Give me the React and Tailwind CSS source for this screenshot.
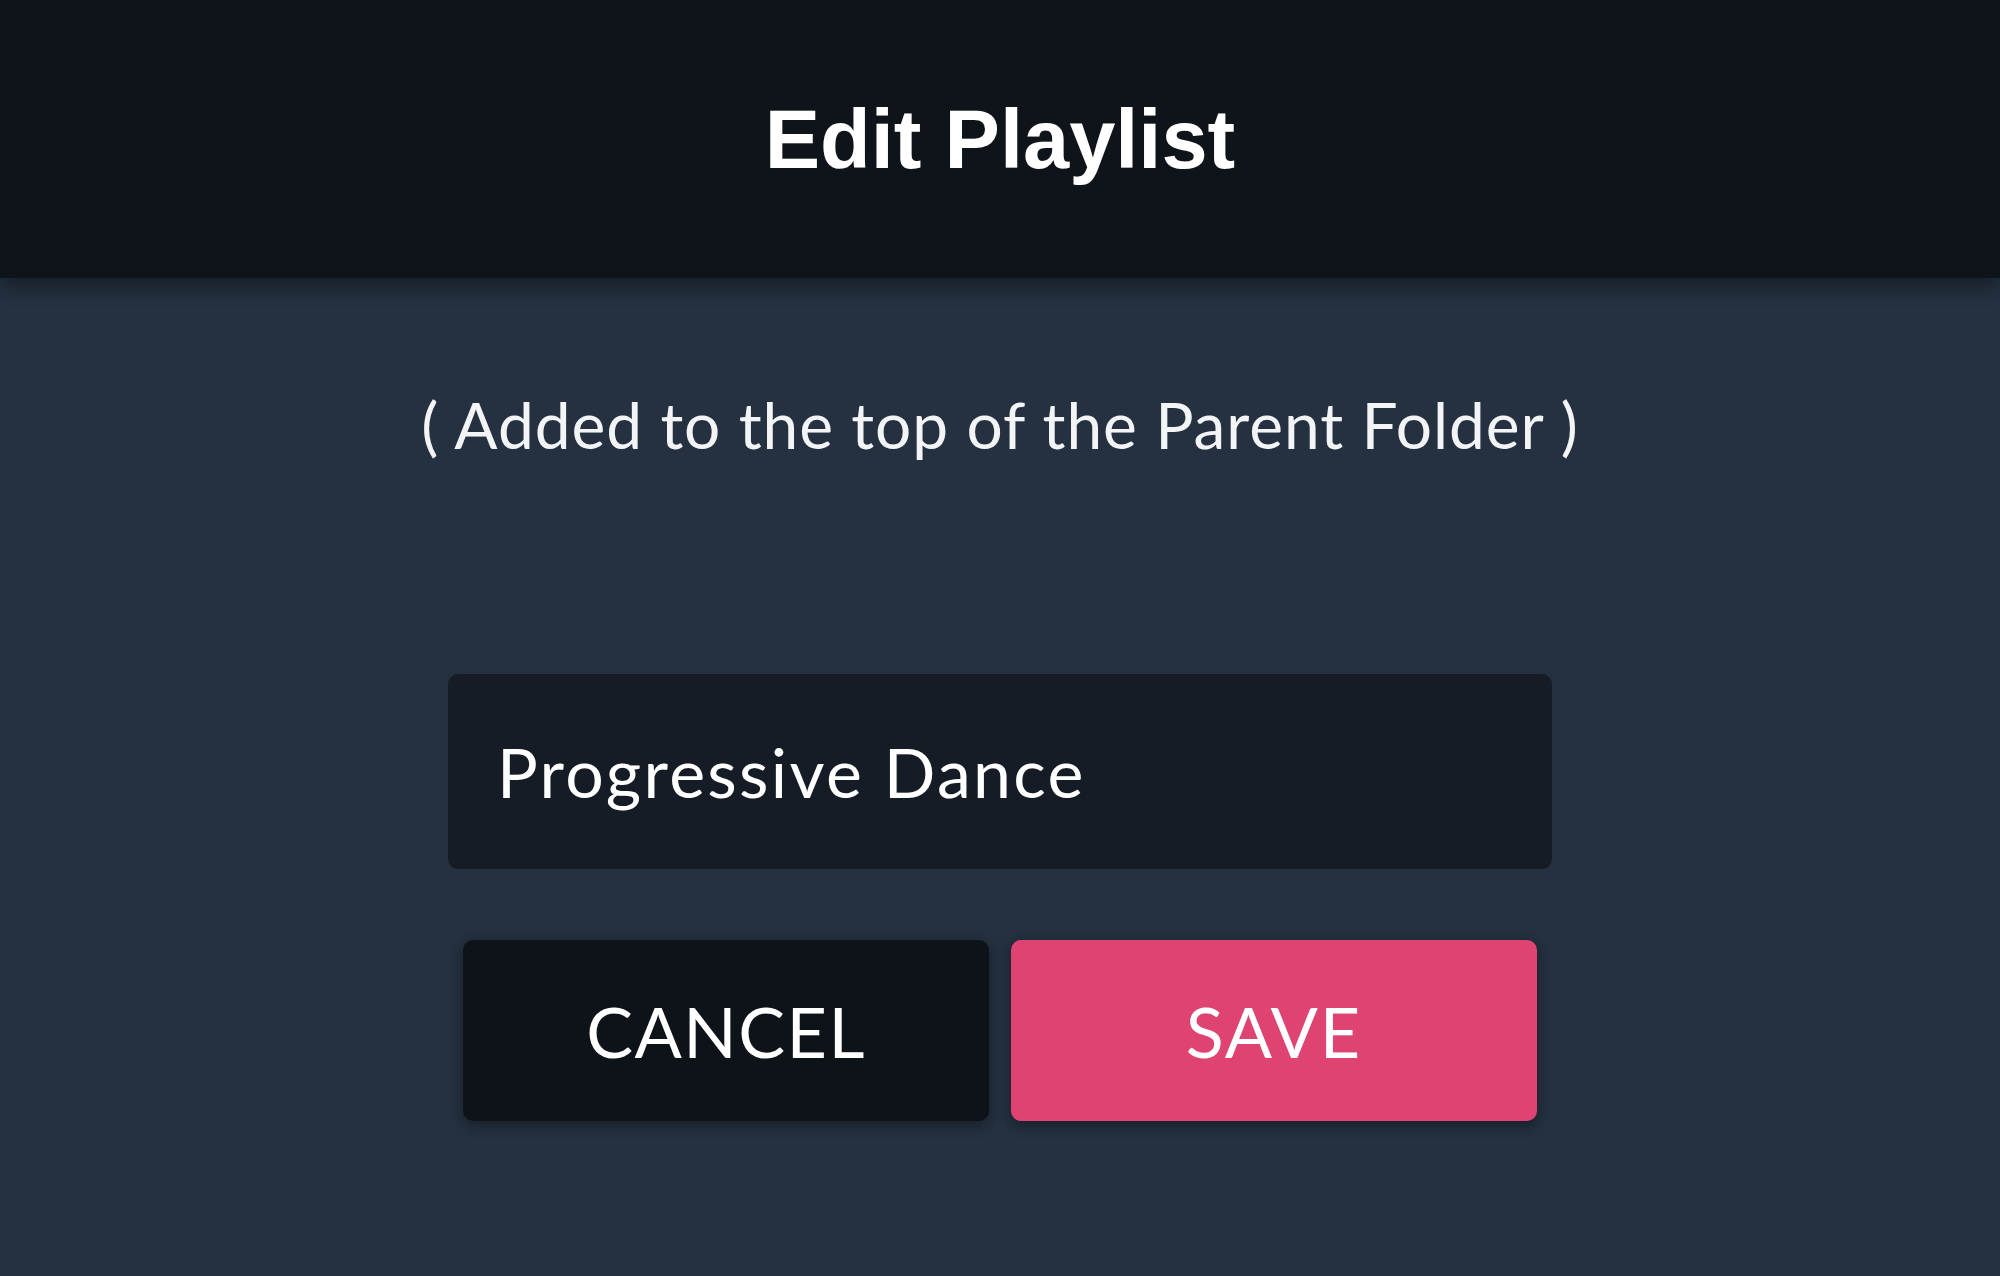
import React from "react";

export default function App() {
  return (
    <div className="h-[1276px] w-full bg-[#253140] flex flex-col overflow-hidden">
      <header className="relative z-10 h-[278px] shrink-0 bg-[#0f141b] flex items-center justify-center shadow-[0_8px_18px_rgba(5,8,12,0.45)]">
        <h1 className="text-[83px] font-bold leading-none text-white font-['Liberation_Sans',Arial,sans-serif]">
          Edit Playlist
        </h1>
      </header>

      <main className="flex flex-col items-center font-['Lato','Liberation_Sans',sans-serif] text-white">
        <p className="mt-[107px] text-[64px] leading-[80px] tracking-[0.95px] text-[#f2f4f6]">
          ( Added to the top of the Parent Folder )
        </p>

        <div className="mt-[209px] w-[1104px] h-[195px] rounded-[10px] bg-[#161c25] flex items-center pl-[49px] pr-[55px]">
          <input
            defaultValue="Progressive Dance"
            className="w-full bg-transparent outline-none border-0 text-[68px] leading-none text-white tracking-[2.3px] font-['Lato','Liberation_Sans',sans-serif]"
          />
        </div>

        <div className="mt-[71px] w-[1074px] flex gap-[22px]">
          <button className="flex-1 h-[181px] rounded-[10px] bg-[#0e131a] text-white text-[70px] leading-none uppercase tracking-[1.5px] shadow-[0_4px_14px_rgba(5,8,12,0.45)] flex items-center justify-center">
            Cancel
          </button>
          <button className="flex-1 h-[181px] rounded-[10px] bg-[#de4371] text-white text-[70px] leading-none uppercase tracking-[2px] shadow-[0_4px_14px_rgba(5,8,12,0.45)] flex items-center justify-center">
            Save
          </button>
        </div>
      </main>
    </div>
  );
}
